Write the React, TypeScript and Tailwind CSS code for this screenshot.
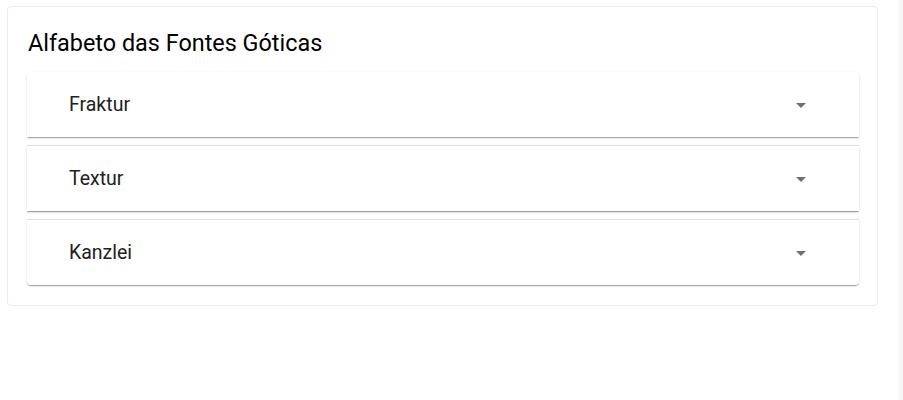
const fonts = ['Fraktur', 'Textur', 'Kanzlei'];

function ArrowDropDown() {
  return (
    <svg viewBox="0 0 24 24" className="w-6 h-6 fill-[#707070]">
      <path d="M7 10l5 5 5-5z" />
    </svg>
  );
}

function App() {
  return (
    <div className="flex min-h-[400px] bg-white font-['Roboto',sans-serif]">
      <div className="flex-1 pt-[6px] pl-[7px] pr-[20px]">
        <div className="border border-[#ececec] rounded-[4px] pl-[19px] pr-[18px] pt-[20px] pb-[20px]">
          <h2 className="text-[23.4px] leading-[32px] text-black font-normal pl-px mb-[13px]">
            Alfabeto das Fontes Góticas
          </h2>
          <div className="flex flex-col gap-[8px]">
            {fonts.map((name, i) => (
              <div
                key={name}
                className={`flex items-center justify-between bg-white pl-[42px] pr-[46px] shadow-[0_2px_1px_-1px_rgba(0,0,0,0.2),0_1px_1px_0_rgba(0,0,0,0.14),0_1px_3px_0_rgba(0,0,0,0.12)] ${
                  i === 0 ? 'h-[65px] rounded-t-[4px]' : 'h-[66px] border-t border-[#e0e0e0]'
                } ${i === fonts.length - 1 ? 'rounded-b-[4px]' : ''}`}
              >
                <span className="text-[19.5px] leading-[24px] text-[#212121]">{name}</span>
                <ArrowDropDown />
              </div>
            ))}
          </div>
        </div>
      </div>
      <div className="w-[5px] bg-[#f8f8f8]" />
    </div>
  );
}

export default App;
